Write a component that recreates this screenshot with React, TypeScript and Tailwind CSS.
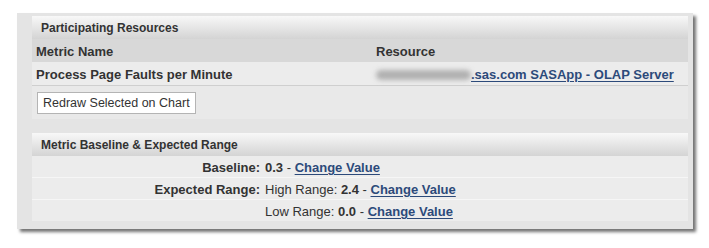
import React from 'react'

const font = { fontFamily: '"Liberation Sans", Arial, sans-serif' }

function SectionHeader({ title }: { title: string }) {
  return (
    <div className="h-[23px] flex items-center pl-[9px] pt-[1px] bg-gradient-to-b from-[#f8f8f8] to-[#d4d4d4] text-[12px] font-bold text-[#333]">
      {title}
    </div>
  )
}

function ChangeLink() {
  return <a className="font-bold text-[#2c4a7a] underline underline-offset-2 cursor-pointer">Change Value</a>
}

export default function App() {
  return (
    <div className="w-[709px] h-[248px] bg-white pt-[13px] pl-[17px]" style={font}>
      <div className="w-[676px] h-[216px] bg-[#e4e4e4] pl-[15px] pr-[5px] pt-[3px] shadow-[3px_3px_3px_rgba(0,0,0,0.55)]">
        {/* Participating Resources */}
        <div className="w-[656px] bg-[#e9e9e9]">
          <SectionHeader title="Participating Resources" />
          <div className="flex h-[23px] items-center pt-[2px] bg-[#d8d8d8] text-[13px] font-bold text-[#333]">
            <div className="w-[344px] pl-[4px]">Metric Name</div>
            <div>Resource</div>
          </div>
          <div className="flex h-[24px] items-center pt-[2px] bg-[#ececec] border-b border-[#cfcfcf] text-[13px] font-bold text-[#333]">
            <div className="w-[344px] pl-[4px]">Process Page Faults per Minute</div>
            <div className="flex items-center">
              <span className="inline-block w-[95px] h-[10px] bg-[#b0b0b0] blur-[2.5px] rounded-full" />
              <a className="text-[#2c4a7a] underline underline-offset-2">.sas.com SASApp - OLAP Server</a>
            </div>
          </div>
          <div className="h-[33px] pt-[4px] pl-[5px]">
            <button className="h-[22px] px-[5px] bg-white border border-[#b4b4b4] text-[12.5px] text-[#333]">
              Redraw Selected on Chart
            </button>
          </div>
        </div>
        <div className="h-[14px]" />
        {/* Metric Baseline & Expected Range */}
        <div className="w-[656px] bg-[#ececec]">
          <SectionHeader title="Metric Baseline & Expected Range" />
          <div className="text-[13px] text-[#333]">
            <div className="flex h-[22px] items-center pt-[2px] border-b border-[#f6f6f6]">
              <div className="w-[232px] text-right font-bold pr-[4px]">Baseline:</div>
              <div className="pl-[1px]">
                <span className="font-bold">0.3</span> - <ChangeLink />
              </div>
            </div>
            <div className="flex h-[22px] items-center pt-[2px] border-b border-[#f6f6f6]">
              <div className="w-[232px] text-right font-bold pr-[4px]">Expected Range:</div>
              <div className="pl-[1px]">
                High Range: <span className="font-bold">2.4</span> - <ChangeLink />
              </div>
            </div>
            <div className="flex h-[21px] items-center pt-[2px]">
              <div className="w-[232px]" />
              <div className="pl-[1px]">
                Low Range: <span className="font-bold">0.0</span> - <ChangeLink />
              </div>
            </div>
          </div>
        </div>
      </div>
    </div>
  )
}
